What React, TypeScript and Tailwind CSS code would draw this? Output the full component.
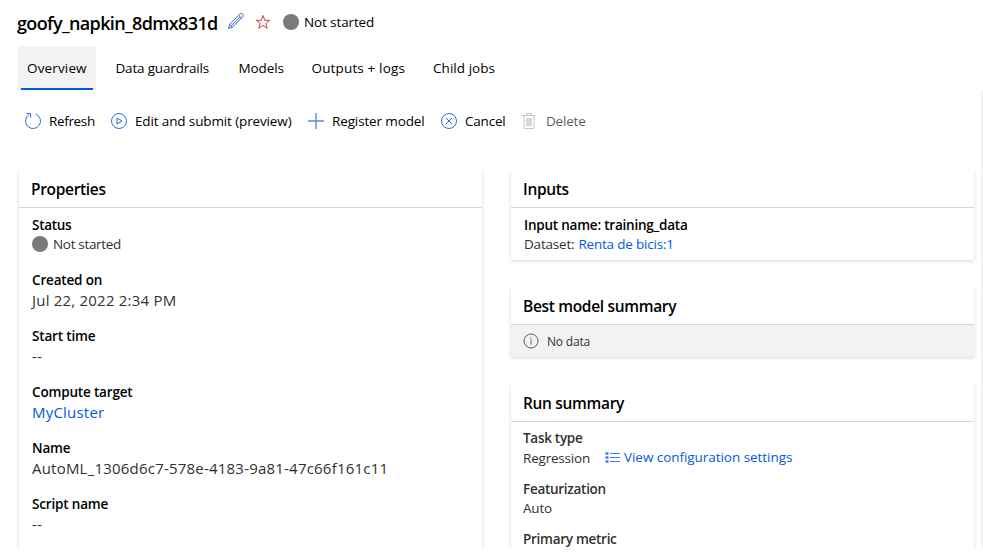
import type { ReactNode } from "react";

const stroke = { fill: "none", stroke: "currentColor", strokeWidth: 1 } as const;

function PencilIcon() {
  return (
    <svg className="h-[18px] w-[18px] text-[#3b66d0]" viewBox="0 0 18 18" {...stroke} strokeLinejoin="round">
      <path d="M1.5 16.5l1.1-4.2L12.8 2.1c.9-.9 2.1-.9 2.9-.1s.8 2-.1 2.9L5.500 15.200zM11.600 3.300l3.100 3.100M2.600 12.300l3 3M4.100 13.800L13 4.900" />
    </svg>
  );
}

function StarIcon() {
  return (
    <svg className="h-4 w-4 text-[#bf4a3c]" viewBox="0 0 16 16" {...stroke}>
      <path d="M8 1.4l1.7 4.900h5.100l-4.100 3.100 1.600 5L8 11.300l-4.300 3.100 1.600-5L1.200 6.300h5.100z" />
    </svg>
  );
}

function RefreshIcon() {
  return (
    <svg className="h-4 w-4 text-[#2f6be0]" viewBox="0 0 16 16" {...stroke}>
      <path d="M10.6 1a7.5 7.5 0 1 1-6.400.6M1.600.600h4v4" />
    </svg>
  );
}

function PlayIcon() {
  return (
    <svg className="h-4 w-4 text-[#2f6be0]" viewBox="0 0 16 16" {...stroke}>
      <circle cx="8" cy="8" r="7.5" />
      <path d="M6 4.900v6.200L11 8z" />
    </svg>
  );
}

function PlusIcon() {
  return (
    <svg className="h-4 w-4 text-[#5d8ae6]" viewBox="0 0 16 16" {...stroke}>
      <path d="M8 0v16M0 8h16" strokeWidth="1.4" />
    </svg>
  );
}

function CancelIcon() {
  return (
    <svg className="h-4 w-4 text-[#2f6be0]" viewBox="0 0 16 16" {...stroke}>
      <circle cx="8" cy="8" r="7.5" />
      <path d="M5 5l6 6M11 5l-6 6" />
    </svg>
  );
}

function TrashIcon() {
  return (
    <svg className="h-4 w-4 text-[#c8c6c4]" viewBox="0 0 16 16" {...stroke}>
      <path d="M1.500 2.500h13M5.500 2V.500h5V2M3 2.500v13h10v-13" />
      <path d="M6 5v8M8 5v8M10 5v8" strokeWidth="1.4" />
    </svg>
  );
}

function InfoIcon() {
  return (
    <svg className="h-4 w-4 text-[#605e5c]" viewBox="0 0 16 16" {...stroke}>
      <circle cx="8" cy="8" r="7" />
      <path d="M8 6.500v5M8 4.300v1.200" />
    </svg>
  );
}

function ListIcon() {
  return (
    <svg className="h-3 w-[15px] text-[#3f7ce4]" viewBox="0 0 15 12" {...stroke}>
      <path d="M5 2.500h10M5 6.500h10M5 10.500h10" strokeWidth="1.2" />
      <path d="M.500 2.500h3M.500 6.500h3M.500 10.500h3" strokeWidth="2.4" />
    </svg>
  );
}

function Dot() {
  return <span className="size-4 shrink-0 rounded-full bg-[#7a7a7a]" />;
}

function Card({ title, tracking, className = "", children }: { title: string; tracking: string; className?: string; children: ReactNode }) {
  return (
    <section className={`bg-white shadow-[0_1.6px_3.6px_rgba(0,0,0,0.132),0_0.3px_0.9px_rgba(0,0,0,0.3)] ${className}`}>
      <h2 className={`h-[38px] border-b border-[#d6d6d6] pt-2 pl-3 text-[15.500px] leading-[22px] font-semibold text-black ${tracking}`}>{title}</h2>
      {children}
    </section>
  );
}

function Property({ label, children }: { label: string; children: ReactNode }) {
  return (
    <div className="h-14">
      <dt className="h-5 font-semibold tracking-[-0.170px] text-black">{label}</dt>
      <dd className="-mt-px h-[22px] text-[15px] leading-[22px] tracking-[0.210px]">{children}</dd>
    </div>
  );
}

export default function App() {
  return (
    <div className="h-[557px] w-[983px] overflow-hidden bg-white font-['Open_Sans','Noto_Sans',sans-serif] text-[13.500px] leading-5 whitespace-nowrap text-[#323130]">
      <div className="flex h-[548px] flex-col overflow-hidden">
        <header className="flex h-[46px] items-start pl-[17px] text-black">
          <h1 className="w-[210px] pt-[11px] text-[18px] leading-6 font-semibold tracking-[-0.630px]">goofy_napkin_8dmx831d</h1>
          <div className="pt-3"><PencilIcon /></div>
          <div className="pt-[14px] pl-[10px]"><StarIcon /></div>
          <div className="flex items-center gap-[5px] pt-3 pl-3">
            <Dot />
            <span className="tracking-[-0.120px]">Not started</span>
          </div>
        </header>
        <nav className="flex h-11 shrink-0 pl-[18px] text-black">
          <div className="w-[78px] bg-[#f2f2f2] px-[3px]">
            <div className="h-11 border-b-2 border-[#015cda] pt-3 pl-[6px] font-medium tracking-[0.150px]">Overview</div>
          </div>
          <div className="w-[123px] pt-3 pl-[19.500px] tracking-[-0.180px]">Data guardrails</div>
          <div className="w-[73px] pt-3 pl-[19.500px] tracking-[-0.100px]">Models</div>
          <div className="w-[122px] pt-3 pl-[19.500px] tracking-[0.150px]">Outputs + logs</div>
          <div className="pt-3 pl-[19px] tracking-[0.050px]">Child jobs</div>
        </nav>
        <main className="mt-px min-h-0 flex-1 overflow-hidden border-r-2 border-[#f0f0f0]">
          <div className="flex h-[79px] items-start pt-5 pl-[25px] text-black">
            <div className="flex w-[86px] items-center gap-2"><RefreshIcon /><span className="tracking-[-0.350px]">Refresh</span></div>
            <div className="flex w-[197px] items-center gap-2"><PlayIcon /><span className="tracking-[-0.130px]">Edit and submit (preview)</span></div>
            <div className="flex w-[133px] items-center gap-2"><PlusIcon /><span className="tracking-[-0.130px]">Register model</span></div>
            <div className="flex w-[80px] items-center gap-2"><CancelIcon /><span className="tracking-[-0.200px]">Cancel</span></div>
            <div className="flex items-center gap-[9px] text-[#605e5c]"><TrashIcon /><span className="tracking-[-0.200px]">Delete</span></div>
          </div>
          <div className="flex items-start gap-[29px] pl-[19px]">
            <Card title="Properties" tracking="tracking-[-0.320px]" className="h-[440px] w-[463px]">
              <dl className="pt-[7px] pl-[13px]">
                <div className="h-[55px]">
                  <dt className="h-5 font-semibold tracking-[-0.280px] text-black">Status</dt>
                  <dd className="-mt-px flex items-center gap-[5px] tracking-[-0.320px]"><Dot />Not started</dd>
                </div>
                <Property label="Created on">Jul 22, 2022 2:34 PM</Property>
                <Property label="Start time">--</Property>
                <Property label="Compute target"><span className="text-[#015cda]">MyCluster</span></Property>
                <Property label="Name">AutoML_1306d6c7-578e-4183-9a81-47c66f161c11</Property>
                <Property label="Script name">--</Property>
              </dl>
            </Card>
            <div className="w-[463px]">
              <Card title="Inputs" tracking="tracking-[-0.320px]" className="h-[90px]">
                <div className="pt-[7px] pl-[13px]">
                  <div className="h-[19px] font-semibold tracking-[-0.220px] text-black">Input name: training_data</div>
                  <div className="flex gap-1 tracking-[-0.200px]"><span>Dataset:</span><span className="text-[#015cda]">Renta de bicis:1</span></div>
                </div>
              </Card>
              <Card title="Best model summary" tracking="tracking-[-0.320px]" className="mt-[27px] h-[70px]">
                <div className="flex h-8 items-center gap-2 bg-[#f3f2f1] pl-3 text-[12px]"><InfoIcon /><span className="pt-0.5 tracking-[-0.200px]">No data</span></div>
              </Card>
              <Card title="Run summary" tracking="tracking-[-0.320px]" className="mt-[27px] h-[200px]">
                <div className="pt-[6px] pl-3">
                  <div className="h-5 font-semibold tracking-[-0.280px]">Task type</div>
                  <div className="flex h-[31px]">
                    <span className="w-[82px] tracking-[-0.200px]">Regression</span>
                    <span className="-mt-px flex h-5 items-center gap-1 text-[#015cda]"><ListIcon /><span className="tracking-[-0.050px]">View configuration settings</span></span>
                  </div>
                  <div className="h-[19px] font-semibold tracking-[-0.280px]">Featurization</div>
                  <div className="h-[31px] tracking-[-0.200px]">Auto</div>
                  <div className="font-semibold tracking-[-0.280px]">Primary metric</div>
                </div>
              </Card>
            </div>
          </div>
        </main>
      </div>
    </div>
  );
}
